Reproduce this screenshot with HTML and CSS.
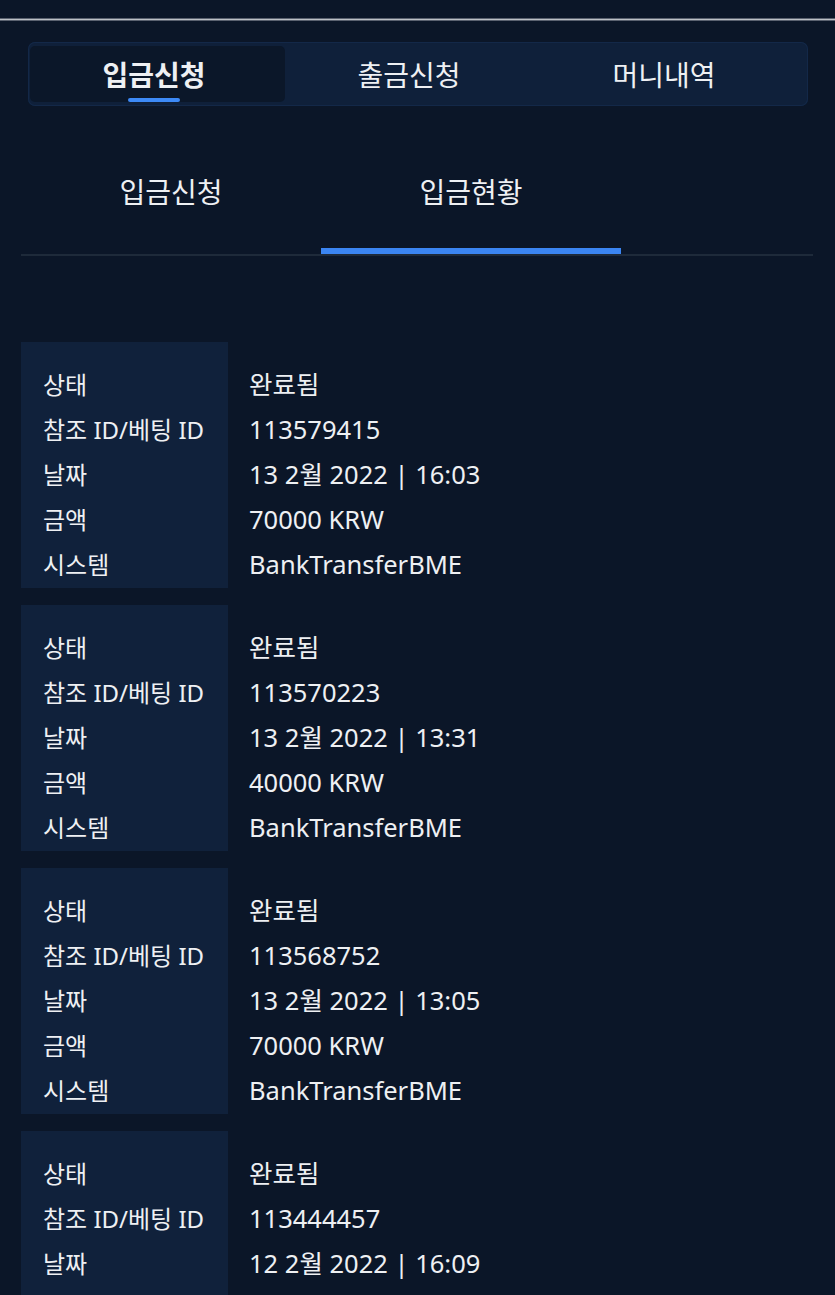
FILE: index.html
```html
<!DOCTYPE html>
<html lang="ko">
<head>
    <meta charset="UTF-8">
    <meta name="viewport" content="width=device-width, initial-scale=1.0">
    <title>입금현황</title>
    <link rel="stylesheet" href="styles.css">
</head>
<body>
    <div class="top-line"></div>

    <nav class="main-tabs">
        <a class="main-tab active">입금신청</a>
        <a class="main-tab">출금신청</a>
        <a class="main-tab">머니내역</a>
    </nav>

    <nav class="sub-tabs">
        <a class="sub-tab">입금신청</a>
        <a class="sub-tab active">입금현황</a>
    </nav>

    <div class="history">
        <div class="record">
            <div class="labels">
                <div>상태</div>
                <div>참조 ID/베팅 ID</div>
                <div>날짜</div>
                <div>금액</div>
                <div>시스템</div>
            </div>
            <div class="values">
                <div>완료됨</div>
                <div>113579415</div>
                <div>13 2월 2022 | 16:03</div>
                <div>70000 KRW</div>
                <div>BankTransferBME</div>
            </div>
        </div>

        <div class="record">
            <div class="labels">
                <div>상태</div>
                <div>참조 ID/베팅 ID</div>
                <div>날짜</div>
                <div>금액</div>
                <div>시스템</div>
            </div>
            <div class="values">
                <div>완료됨</div>
                <div>113570223</div>
                <div>13 2월 2022 | 13:31</div>
                <div>40000 KRW</div>
                <div>BankTransferBME</div>
            </div>
        </div>

        <div class="record">
            <div class="labels">
                <div>상태</div>
                <div>참조 ID/베팅 ID</div>
                <div>날짜</div>
                <div>금액</div>
                <div>시스템</div>
            </div>
            <div class="values">
                <div>완료됨</div>
                <div>113568752</div>
                <div>13 2월 2022 | 13:05</div>
                <div>70000 KRW</div>
                <div>BankTransferBME</div>
            </div>
        </div>

        <div class="record">
            <div class="labels">
                <div>상태</div>
                <div>참조 ID/베팅 ID</div>
                <div>날짜</div>
                <div>금액</div>
                <div>시스템</div>
            </div>
            <div class="values">
                <div>완료됨</div>
                <div>113444457</div>
                <div>12 2월 2022 | 16:09</div>
                <div>70000 KRW</div>
                <div>BankTransferBME</div>
            </div>
        </div>
    </div>
</body>
</html>
```

FILE: styles.css
```css
body {
    font-family: "Noto Sans", "Noto Sans CJK KR", sans-serif;
    background-color: #0b1628;
    color: #eef0f3;
    margin: 0;
    padding: 18px 0 0;
}

.top-line {
    height: 1px;
    background-color: #bcc0c5;
    border-top: 1px solid #5b6270;
    border-bottom: 1px solid #5b6270;
}

.main-tabs {
    display: flex;
    margin: 21px 27px 0 28px;
    padding: 4px 13px 4px 2px;
    height: 56px;
    background-color: #0f203a;
    border-radius: 7px;
    box-shadow: inset 0 0 0 1px #132848;
}

.main-tab {
    flex: 1;
    display: flex;
    align-items: center;
    justify-content: center;
    position: relative;
    font-size: 28px;
    border-radius: 5px;
    padding: 0 7px 1px 0;
}

.main-tab.active {
    background-color: #0b1729;
    font-weight: bold;
}

.main-tab.active::after {
    content: "";
    position: absolute;
    left: 50%;
    bottom: 0;
    width: 52px;
    height: 4px;
    margin-left: -30px;
    border-radius: 2px;
    background-color: #3d8af7;
}

.sub-tabs {
    display: flex;
    margin: 22px 22px 0 21px;
    border-bottom: 2px solid #1e2a3a;
}

.sub-tab {
    width: 300px;
    height: 106px;
    padding: 10px 0 4px;
    display: flex;
    align-items: center;
    justify-content: center;
    font-size: 28px;
    border-bottom: 6px solid transparent;
}

.sub-tab.active {
    border-bottom-color: #3b85f2;
}

.history {
    display: flex;
    flex-direction: column;
    gap: 17px;
    margin: 86px 21px 0;
}

.record {
    display: flex;
    font-size: 24px;
    line-height: 45px;
}

.labels {
    width: 185px;
    padding: 20px 0 1px 22px;
    background-color: #10213b;
}

.values {
    padding: 20px 0 1px 21px;
    font-size: 25.5px;
}
```
